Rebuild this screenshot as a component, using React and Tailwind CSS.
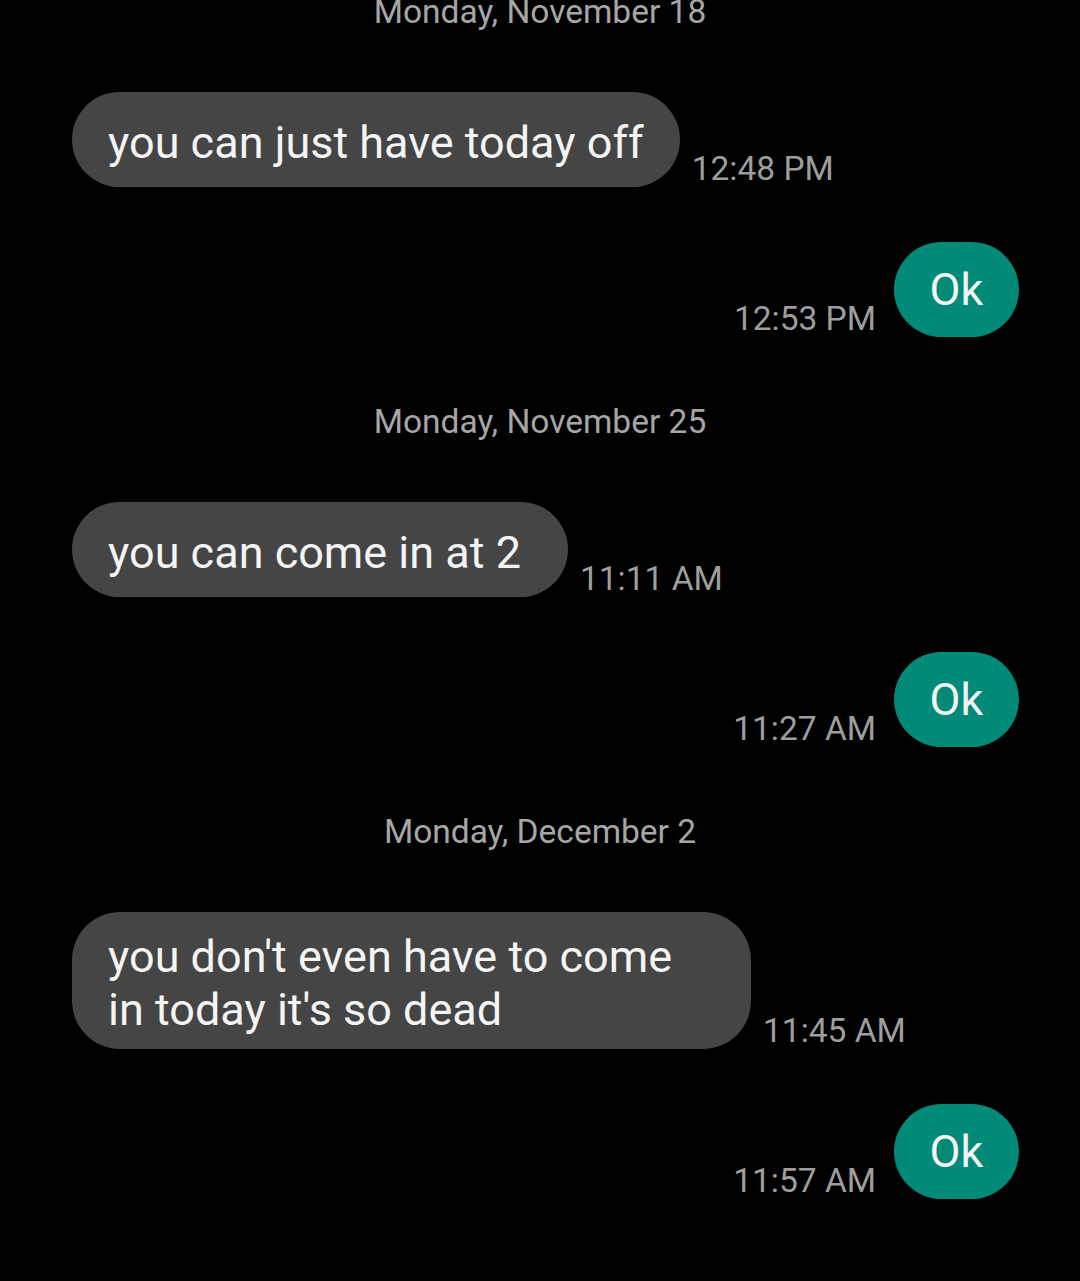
export default function App() {
  const groups = [
    { date: "Monday, November 18", inText: "you can just have today off", inTime: "12:48 PM", outTime: "12:53 PM", pad: "pl-9 pr-9" },
    { date: "Monday, November 25", inText: "you can come in at 2", inTime: "11:11 AM", outTime: "11:27 AM", pad: "pl-9 pr-[47px]" },
    { date: "Monday, December 2", inText: "you don't even have to come in today it's so dead", inTime: "11:45 AM", outTime: "11:57 AM", pad: "pl-9 pr-9" },
  ];
  return (
    <div className="w-[1080px] h-[1281px] bg-black overflow-hidden" style={{ fontFamily: "Roboto, 'Noto Sans', sans-serif" }}>
      <div className="flex flex-col mt-[-8px]">
        {groups.map((g, i) => (
          <div key={i} className={i === 0 ? "flex flex-col" : "flex flex-col mt-[65px]"}>
            <div className="text-center text-[33.5px] leading-[40px] text-[#a6a6a6]">{g.date}</div>
            <div className="flex items-end mt-[60px] pl-[72px]">
              <div className={`bg-[#454545] rounded-[48px] min-h-[95px] max-w-[679px] ${g.pad} pt-[18px] pb-[13px] flex items-center text-[45px] leading-[53px] text-[#f4f4f4]`}>
                {g.inText}
              </div>
              <div className="ml-3 text-[33.5px] leading-[37px] text-[#9e9e9e] whitespace-nowrap">{g.inTime}</div>
            </div>
            <div className="flex items-end justify-end mt-[55px] pr-[61px]">
              <div className="mr-[18px] text-[33.5px] leading-[37px] text-[#9e9e9e] whitespace-nowrap">{g.outTime}</div>
              <div className="bg-[#028a78] rounded-[48px] h-[95px] w-[125px] flex items-center justify-center text-[45px] leading-[53px] text-[#f4f4f4]">
                Ok
              </div>
            </div>
          </div>
        ))}
      </div>
    </div>
  );
}
